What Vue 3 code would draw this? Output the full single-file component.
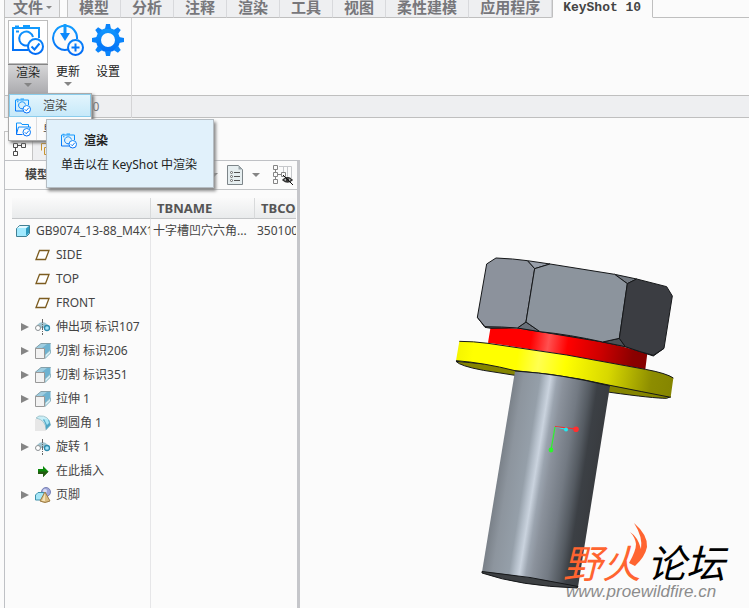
<script setup>
const tabs = ['模型', '分析', '注释', '渲染', '工具', '视图', '柔性建模', '应用程序']

const rows = [
  { label: 'SIDE', icon: 'plane' },
  { label: 'TOP', icon: 'plane' },
  { label: 'FRONT', icon: 'plane' },
  { label: '伸出项 标识107', icon: 'revolve', open: true },
  { label: '切割 标识206', icon: 'extrude', open: true },
  { label: '切割 标识351', icon: 'extrude', open: true },
  { label: '拉伸 1', icon: 'extrude', open: true },
  { label: '倒圆角 1', icon: 'round' },
  { label: '旋转 1', icon: 'revolve', open: true },
  { label: '在此插入', icon: 'insert' },
  { label: '页脚', icon: 'footer', open: true }
]
</script>

<template>
  <div class="app">
    <svg class="defs" width="0" height="0" aria-hidden="true">
      <defs>
        <linearGradient id="blue" gradientUnits="userSpaceOnUse" x1="0" y1="0" x2="0" y2="32">
          <stop offset="0" stop-color="#14a0ff" />
          <stop offset="1" stop-color="#0068f5" />
        </linearGradient>
        <symbol id="camera" viewBox="0 0 32 32">
          <g fill="none" stroke="url(#blue)" stroke-width="2">
            <path d="M16 26H1V4H27V14" />
            <path d="M3 2.500H7M11 2H18" />
            <path d="M4 7.500H7" />
            <path d="M17 21A7 7 0 1 1 21 13" />
            <circle cx="23.500" cy="22.500" r="7.500" fill="#fff" />
            <path d="M19.500 22.500L22.500 25.500L27.500 19.500" />
          </g>
        </symbol>
        <symbol id="folder" viewBox="0 0 32 32">
          <g fill="none" stroke="url(#blue)" stroke-width="2">
            <path d="M15 27H3V4H12L14 7H27V12M3 26L7 12H31L29 17" />
            <circle cx="23.500" cy="22.500" r="7.500" fill="#fff" />
            <path d="M19.500 22.500L22.500 25.500L27.500 19.500" />
          </g>
        </symbol>
      </defs>
    </svg>

    <nav class="tabs">
      <button class="tab file" type="button">文件<i class="caret small"></i></button>
      <span class="tab-gap"></span>
      <button v-for="t in tabs" :key="t" class="tab" type="button">{{ t }}</button>
      <button class="tab active" type="button">KeyShot 10</button>
      <span class="tab-rest"></span>
    </nav>

    <section class="ribbon">
      <div class="group">
        <div class="tools">
          <button class="tool pressed" type="button">
            <span class="pic"><svg width="32" height="32"><use href="#camera" /></svg></span>
            <span class="cap">渲染<i class="caret"></i></span>
          </button>
          <button class="tool" type="button">
            <span class="pic">
              <svg width="32" height="32" viewBox="0 0 32 32" fill="none" stroke="url(#blue)" stroke-width="2">
                <path d="M16 25.500A12 12 0 1 1 25 15" />
                <path d="M13 0V10" stroke-width="3" />
                <path d="M8 9H18L13 17Z" fill="#0c88fb" stroke="none" />
                <circle cx="23.500" cy="23.500" r="7.500" />
                <path d="M19.500 23.500H27.500M23.500 19.500V27.500" />
              </svg>
            </span>
            <span class="cap">更新<i class="caret"></i></span>
          </button>
          <button class="tool" type="button">
            <span class="pic">
              <svg width="32" height="32" viewBox="0 0 32 32">
                <circle cx="16" cy="16" r="9.500" fill="none" stroke="url(#blue)" stroke-width="5" />
                <g fill="#0a84fb">
                  <path id="tooth" d="M13 5L14 0H18L19 5Z" />
                  <use v-for="n in 7" :key="n" href="#tooth" :transform="`rotate(${n * 45} 16 16)`" />
                </g>
              </svg>
            </span>
            <span class="cap">设置</span>
          </button>
        </div>
        <div class="group-name">KeyShot 10</div>
      </div>
      <div class="ribbon-rest"><div class="group-name"></div></div>

      <div class="menu">
        <button class="item hot" type="button">
          <svg width="16" height="16"><use href="#camera" /></svg><span>渲染</span>
        </button>
        <button class="item" type="button">
          <svg width="16" height="16"><use href="#folder" /></svg><span>单击</span>
        </button>
      </div>
      <div class="tooltip" role="tooltip">
        <div class="tip-head"><svg width="16" height="16"><use href="#camera" /></svg><b>渲染</b></div>
        <div>单击以在 KeyShot 中渲染</div>
      </div>
    </section>

    <main class="work">
      <aside class="side">
        <div class="side-tabs">
          <button class="stab on" type="button" aria-label="模型树">
            <svg width="14" height="14" viewBox="0 0 14 14" fill="none" stroke="#4c4c4c">
              <path d="M.5 1.500H4.500V5.500H.5ZM8.500 1.500H12.500V5.500H8.500ZM.5 9.500H4.500V13.500H.5ZM4.500 3.500H8.500M2.500 5.500V9.500" />
            </svg>
          </button>
          <button class="stab" type="button" aria-label="文件夹">
            <svg width="14" height="14" viewBox="0 0 14 14" fill="none" stroke="#c8952e">
              <path d="M.5 8.500V1.500H5.500L6.500 3.500H10.500V5.500M3.500 12.500V5.500H13.500V12.500Z" />
            </svg>
          </button>
        </div>
        <div class="panel">
          <div class="panel-bar">
            <b>模型树</b>
            <span class="bar-tools">
              <i class="caret"></i>
              <svg width="18" height="20" viewBox="0 0 18 20">
                <path d="M1.500.5H12.500L16.500 4.500V19.500H1.500Z" fill="#e6eef0" stroke="#7d8589" />
                <path d="M12.500.5V4.500H16.500Z" fill="#9aa5aa" />
                <path d="M8 7.500H14M8 11.500H14M8 15.500H14" stroke="#555" />
                <g fill="#fff" stroke="#666"><circle cx="5.500" cy="7.500" r="1" /><circle cx="5.500" cy="11.500" r="1" /><circle cx="5.500" cy="15.500" r="1" /></g>
              </svg>
              <i class="caret"></i>
              <svg class="cols" width="22" height="22" viewBox="0 0 22 22" fill="none">
                <path d="M7 2.500H19.500V14M11.500 2.500V8M15.500 2.500V12" stroke="#c6c8cb" />
                <path d="M1.500 1.500H5.500V5.500H1.500ZM9.500 8.500H13.500V12.500H9.500ZM1.500 8.500H5.500V12.500H1.500ZM1.500 15.500H5.500V19.500H1.500ZM3.500 5.500V8.500M5.500 10.500H9.500M3.500 12.500V15.500" stroke="#858585" />
                <path d="M11 16Q15.500 11 20 16Q15.500 20 11 16Z" fill="#fff" stroke="#333" stroke-width="1.500" />
                <circle cx="15.500" cy="16" r="2" fill="#333" /><path d="M11 11L21 21" stroke="#111" />
              </svg>
            </span>
          </div>
          <div class="tree">
            <table>
              <colgroup><col class="c1" /><col class="c2" /><col /></colgroup>
              <thead><tr><th></th><th>TBNAME</th><th>TBCODE</th></tr></thead>
              <tbody>
                <tr>
                  <td><div class="node root">
                    <svg width="14" height="14" viewBox="0 0 14 14"><path d="M.5 4.500L3.500 1.500H13.500V9.500L10.500 12.500H.5Z" fill="#a2eaff" stroke="#428094" /><path d="M10 4.500L13 2V9L10 12Z" fill="#2f9cc0" /><path d="M1 4L4 2H12L10 4Z" fill="#e5f9ff" /></svg>
                    <span>GB9074_13-88_M4X10</span>
                  </div></td>
                  <td>十字槽凹穴六角...</td>
                  <td>3501000</td>
                </tr>
                <tr v-for="r in rows" :key="r.label">
                  <td><div class="node">
                    <i :class="['twist', { shown: r.open }]"></i>
                    <svg v-if="r.icon === 'plane'" width="16" height="16" viewBox="0 0 16 16"><path d="M4.500 3.500H14L10.500 12.500H1Z" fill="#fff" stroke="#7c5c20" stroke-width="1.300" /></svg>
                    <svg v-else-if="r.icon === 'revolve'" width="16" height="16" viewBox="0 0 16 16" fill="none">
                      <path d="M2 6Q7.500 0 13 6L11 9H4Z" fill="#9fc3cf" /><circle cx="3" cy="9" r="2.500" fill="#fff" stroke="#8b9093" /><circle cx="12" cy="9" r="2.500" fill="#a5e5fa" stroke="#2c8aac" stroke-width="1.300" /><path d="M7.500 0V16" stroke="#666" stroke-dasharray="4 1 1 1" />
                    </svg>
                    <svg v-else-if="r.icon === 'extrude'" width="16" height="16" viewBox="0 0 16 16"><path d="M0 5.500L6 .5H15.500L10 6Z" fill="#9fcde0" stroke="#84a0aa" /><path d="M7 5L12 1H15.500V10L10 15.500V6Z" fill="#6db2d0" /><path d="M10 15.500V12L15.500 7V10Z" fill="#d9f3fa" stroke="#91b6c2" /><path d="M.5 5.500H9.500V15.500H.5Z" fill="#f2f2f2" stroke="#989898" /></svg>
                    <svg v-else-if="r.icon === 'round'" width="16" height="16" viewBox="0 0 16 16"><path d="M0 4Q11 3 11 16H0Z" fill="#e7e7e7" /><path d="M4 1Q14 0 15.500 10L11 15Q11 5 1 3Z" fill="#c8eff8" stroke="#a5c6ce" /><path d="M9 4L14 5L15.500 10L11 14.500Q11 8 8 5Z" fill="#4ea4c4" /><path d="M9 4L13 4L14 8L12 10Z" fill="#a9e6f5" /></svg>
                    <svg v-else-if="r.icon === 'insert'" width="16" height="16" viewBox="0 0 16 16"><path d="M3 6H8V3L13.500 8.500L8 14V11H3Z" fill="#0a8a0a" /><path d="M3 8.500H13.500L8 14V11H3Z" fill="#255a12" /></svg>
                    <svg v-else width="16" height="16" viewBox="0 0 16 16"><circle cx="11" cy="5" r="4.500" fill="#9fa6d8" stroke="#7b83b5" /><circle cx="10" cy="4" r="2" fill="#d9dcf5" /><path d="M.5 8L3 5.500H9V11L7 13H.5Z" fill="#a5e6f7" stroke="#3f91ab" /><path d="M10 5L15 14Q10 17 5 14Z" fill="#dbbd82" stroke="#9c7c46" /><path d="M10 6L10 14L7 14Z" fill="#f4e3ba" /></svg>
                    <span>{{ r.label }}</span>
                  </div></td>
                  <td></td>
                  <td></td>
                </tr>
              </tbody>
            </table>
          </div>
        </div>
      </aside>

      <div class="view">
        <svg class="scene" width="449" height="490" viewBox="300 118 449 490">
          <defs>
            <linearGradient id="shank" gradientUnits="userSpaceOnUse" x1="515" y1="371" x2="609" y2="386">
              <stop offset="0" stop-color="#7b828a" /><stop offset=".1" stop-color="#8d959e" /><stop offset=".27" stop-color="#959fa9" />
              <stop offset=".33" stop-color="#b3bdc8" /><stop offset=".38" stop-color="#cad3de" /><stop offset=".45" stop-color="#9ba4af" />
              <stop offset=".52" stop-color="#8b929c" /><stop offset=".68" stop-color="#737a83" /><stop offset=".8" stop-color="#555b62" />
              <stop offset=".88" stop-color="#3c4045" /><stop offset="1" stop-color="#393c40" />
            </linearGradient>
            <linearGradient id="red" gradientUnits="userSpaceOnUse" x1="144" y1="280" x2="622" y2="350">
              <stop offset="0" stop-color="#f00" /><stop offset=".27" stop-color="#f00" /><stop offset=".38" stop-color="#ff5050" />
              <stop offset=".5" stop-color="#f00" /><stop offset=".7" stop-color="#d00000" /><stop offset=".91" stop-color="#8b0000" /><stop offset="1" stop-color="#850000" />
            </linearGradient>
            <linearGradient id="yellow" gradientUnits="userSpaceOnUse" x1="48" y1="330" x2="700" y2="430">
              <stop offset="0" stop-color="#f4f400" /><stop offset=".08" stop-color="#ff0" /><stop offset=".28" stop-color="#ff0" />
              <stop offset=".38" stop-color="#ffff50" /><stop offset=".5" stop-color="#ff0" /><stop offset=".7" stop-color="#d8d800" />
              <stop offset=".9" stop-color="#8d8d00" /><stop offset="1" stop-color="#858500" />
            </linearGradient>
          </defs>
          <g transform="translate(440 240) scale(.33333)" stroke="#151719" stroke-width="3" stroke-linejoin="round">
            <path d="M48 364Q60 378 130 391L225 406L510 457Q640 475 680 475L692 470L510 420L225 380Z" fill="#858500" />
            <path d="M58 304Q100 304 144 310L380 345L616 388Q680 400 700 414L692 472Q610 456 510 436Q420 415 330 403L225 392Q130 368 48 362Z" fill="url(#yellow)" stroke="none" />
            <path d="M58 304Q100 304 144 310M616 388Q680 400 700 414M692 472Q610 456 510 436Q420 415 330 403L225 392Q130 368 48 362" fill="none" />
            <path d="M152 260L300 272L488 304L622 340L616 388L380 345L144 308Z" fill="url(#red)" stroke="none" />
            <path d="M144 310L380 345L616 388" fill="none" />
            <path d="M112 232L135 262L153 265L232 264L300 275L488 306L556 320L640 348L672 325L640 320L260 240Z" fill="#44484e" />
            <path d="M262 62L330 72L284 86Z" fill="#989faa" />
            <path d="M524 103L590 117L562 131Z" fill="#737981" />
            <path d="M258 246L300 275L232 264Z" fill="#697079" />
            <path d="M538 295L556 320L488 306Z" fill="#4b5056" />
            <path d="M168 54Q220 56 262 62L284 86L258 246L232 264Q185 260 135 260L112 232L140 72Z" fill="#8c929c" />
            <path d="M284 86L330 72L524 103L562 131L538 295L488 306Q390 284 300 275L258 246Z" fill="#8c949d" />
            <path d="M562 131L590 117L680 140L697 168L672 325L640 346Q600 336 556 320L538 295Z" fill="#3b3d42" />
          </g>
          <path d="M515 371Q562 374 610 386L578 587Q530 585 482 572Z" fill="url(#shank)" />
          <path d="M515 371Q562 374 610 386" fill="none" stroke="#151719" />
          <path d="M482 571.500Q530 576 578 586.500L577 588Q520 586 482 573Z" fill="#3d4043" stroke="#151719" />
          <g fill="none" stroke-width="1.200">
            <path d="M555 427L551 450" stroke="#2cf52c" /><path d="M555 426.500L566 429.500" stroke="#20eaf0" /><path d="M555 426.500L576 429" stroke="#ff2929" />
          </g>
          <circle cx="566" cy="429.500" r="2" fill="#20eaf0" /><circle cx="576" cy="429.200" r="2.800" fill="#ff3030" /><circle cx="551" cy="450" r="2.400" fill="#2cf52c" />
        </svg>
        <div class="mark">
          <div class="mark-name">
            <span class="fire">野火</span><span>论坛</span>
            <svg class="flame" width="20" height="44" viewBox="0 0 20 44"><path d="M6 0Q20 12 19 24Q17 34 7 43L1 40Q8 28 8 21Q7 14 2 9Q10 14 13 26Q15 14 6 0Z" fill="#ff6430" /></svg>
          </div>
          <div class="mark-url">www.proewildfire.cn</div>
        </div>
      </div>
    </main>
  </div>
</template>

<style>
body { margin: 0; overflow: hidden; background: #fbfbfb; }
</style>

<style scoped>
* { box-sizing: border-box; }
.app { display: flex; flex-direction: column; min-height: 100vh; padding-left: 4px; background: #fbfbfb; color: #444; font: 12px/16px "Noto Sans", "Noto Sans CJK SC", sans-serif; }
.defs { position: absolute; }
button { margin: 0; padding: 0; border: 0; background: none; color: inherit; font: inherit; }
svg { display: block; flex: none; }
.caret { display: inline-block; flex: none; border: 4px solid transparent; border-top-color: #858585; border-bottom: 0; }
.caret.small { border-width: 3px; border-bottom: 0; margin-left: 3px; }

.tabs { display: flex; height: 18px; white-space: nowrap; }
.tab { height: 18px; padding: 0 11px 3px; border-right: 1px solid #d8d9dc; border-bottom: 1px solid #bfbfbf; background: #eeeff1; color: #77777b; font: bold 15px/14px "Noto Sans CJK SC", sans-serif; }
.tab.file { display: flex; align-items: center; padding: 0 7px 3px 8px; border-left: 1px solid #c4c4c4; border-right-color: #c4c4c4; }
.tab-gap { width: 8px; border-right: 1px solid #c4c4c4; border-bottom: 1px solid #bfbfbf; }
.tab.active { padding: 0 11px 2px 10px; border-left: 1px solid #bfbfbf; border-right-color: #bfbfbf; border-bottom-color: #fbfbfb; background: #fbfbfb; color: #444; font: bold 13px/14px "Liberation Mono", monospace; }
.tab-rest { flex: 1; border-bottom: 1px solid #bfbfbf; }

.ribbon { position: relative; display: flex; height: 100px; border-left: 1px solid #c4c4c4; }
.group, .ribbon-rest { display: flex; flex-direction: column; }
.group { width: 127px; border-right: 1px solid #d4d4d6; }
.ribbon-rest { flex: 1; justify-content: flex-end; }
.tools { display: flex; flex: 1; padding: 2px 3px 0; color: #222; }
.tool { display: flex; flex-direction: column; width: 40px; height: 74px; }
.pic { display: grid; place-items: center; width: 40px; height: 44px; padding-bottom: 4px; }
.cap { display: flex; flex: 1; flex-direction: column; align-items: center; width: 40px; gap: 2px; }
.pressed .pic { border: 1px solid #bdbdbd; background: #fff; }
.pressed .cap { border-top: 1px solid #858585; background: linear-gradient(#d6d6d7, #aaaaae); }
.group-name { height: 23px; border-top: 1px solid #bfbfbf; border-bottom: 1px solid #bfbfbf; background: #eeeff1; color: #77777a; line-height: 21px; text-align: center; }

.menu { position: absolute; z-index: 2; top: 75px; left: 3px; width: 84px; border: 1px solid #aaa; background: linear-gradient(#dcdcde, #dcdcde) 27px 0 / 1px 100% no-repeat #fbfbfb; box-shadow: 2px 2px 3px #777; }
.item { display: flex; align-items: center; gap: 12px; width: 100%; height: 23px; padding-left: 5px; border: 1px solid transparent; }
.item.hot { border-color: #8bcdec; background: linear-gradient(#e3f5fd, #c7e9f9); }
.tooltip { position: absolute; z-index: 3; top: 101px; left: 41px; width: 168px; height: 69px; padding: 13px 0 0 14px; border: 1px solid #b5bdc3; background: #e1f1fb; box-shadow: 2px 3px 3px #888; color: #222; white-space: nowrap; }
.tip-head { display: flex; align-items: center; gap: 7px; margin-bottom: 8px; }

.work { display: flex; flex: 1; }
.side { display: flex; flex: none; flex-direction: column; width: 296px; padding-top: 13px; }
.side-tabs { display: flex; height: 29px; }
.stab { display: flex; width: 29px; height: 29px; padding: 10px 0 0 8px; border: 1px solid #c4c4c4; border-left: 0; border-bottom: 0; background: #eeeff1; }
.stab.on { border-left: 1px solid #c4c4c4; background: #fbfbfb; }
.panel { display: flex; flex: 1; flex-direction: column; border: 1px solid #bfc1c5; border-right: 3px solid #c5c6ca; border-bottom: 0; }
.panel-bar { display: flex; align-items: center; justify-content: space-between; height: 29px; padding: 0 3px 0 20px; border-bottom: 1px solid #c4c6c8; }
.bar-tools { display: flex; align-items: center; gap: 8px; }
.cols { margin-left: 4px; }
.tree { flex: 1; margin: 8px 1px 0 7px; background: linear-gradient(#e6e6e8, #e6e6e8) 138px 0 / 1px 100% no-repeat; }
table { width: 100%; table-layout: fixed; border-collapse: separate; border-spacing: 0; }
.c1 { width: 139px; }
.c2 { width: 104px; }
th { height: 21px; padding: 0 6px; border-right: 1px solid #d8dadb; border-bottom: 1px solid #c4c6c8; background: linear-gradient(#fafafa, #e9ebec); color: #555; font-size: 13px; line-height: 20px; text-align: left; overflow: hidden; }
th:last-child { border-right: 0; }
td { height: 24px; padding: 0 2px; overflow: hidden; white-space: nowrap; }
td:first-child { padding: 0; }
.node { display: flex; align-items: center; gap: 5px; padding-left: 9px; overflow: hidden; }
.node.root { gap: 6px; padding-left: 4px; margin-right: 1px; }
.twist { border: 4px solid transparent; border-right: 0; border-left-width: 8px; width: 9px; }
.twist.shown { border-left-color: #858585; }

.view { position: relative; flex: 1; min-width: 0; overflow: hidden; }
.mark { position: absolute; right: 18px; bottom: 6px; width: 168px; white-space: nowrap; }
.mark-name { position: relative; display: flex; gap: 6px; color: #000; font: italic 400 39px/42px "Noto Sans CJK SC", sans-serif; }
.fire { color: #ff6430; }
.flame { position: absolute; top: -17px; left: 65px; }
.mark-url { padding-left: 3px; color: #8c8c8c; font: italic 17px/20px "Liberation Sans", sans-serif; }
</style>
